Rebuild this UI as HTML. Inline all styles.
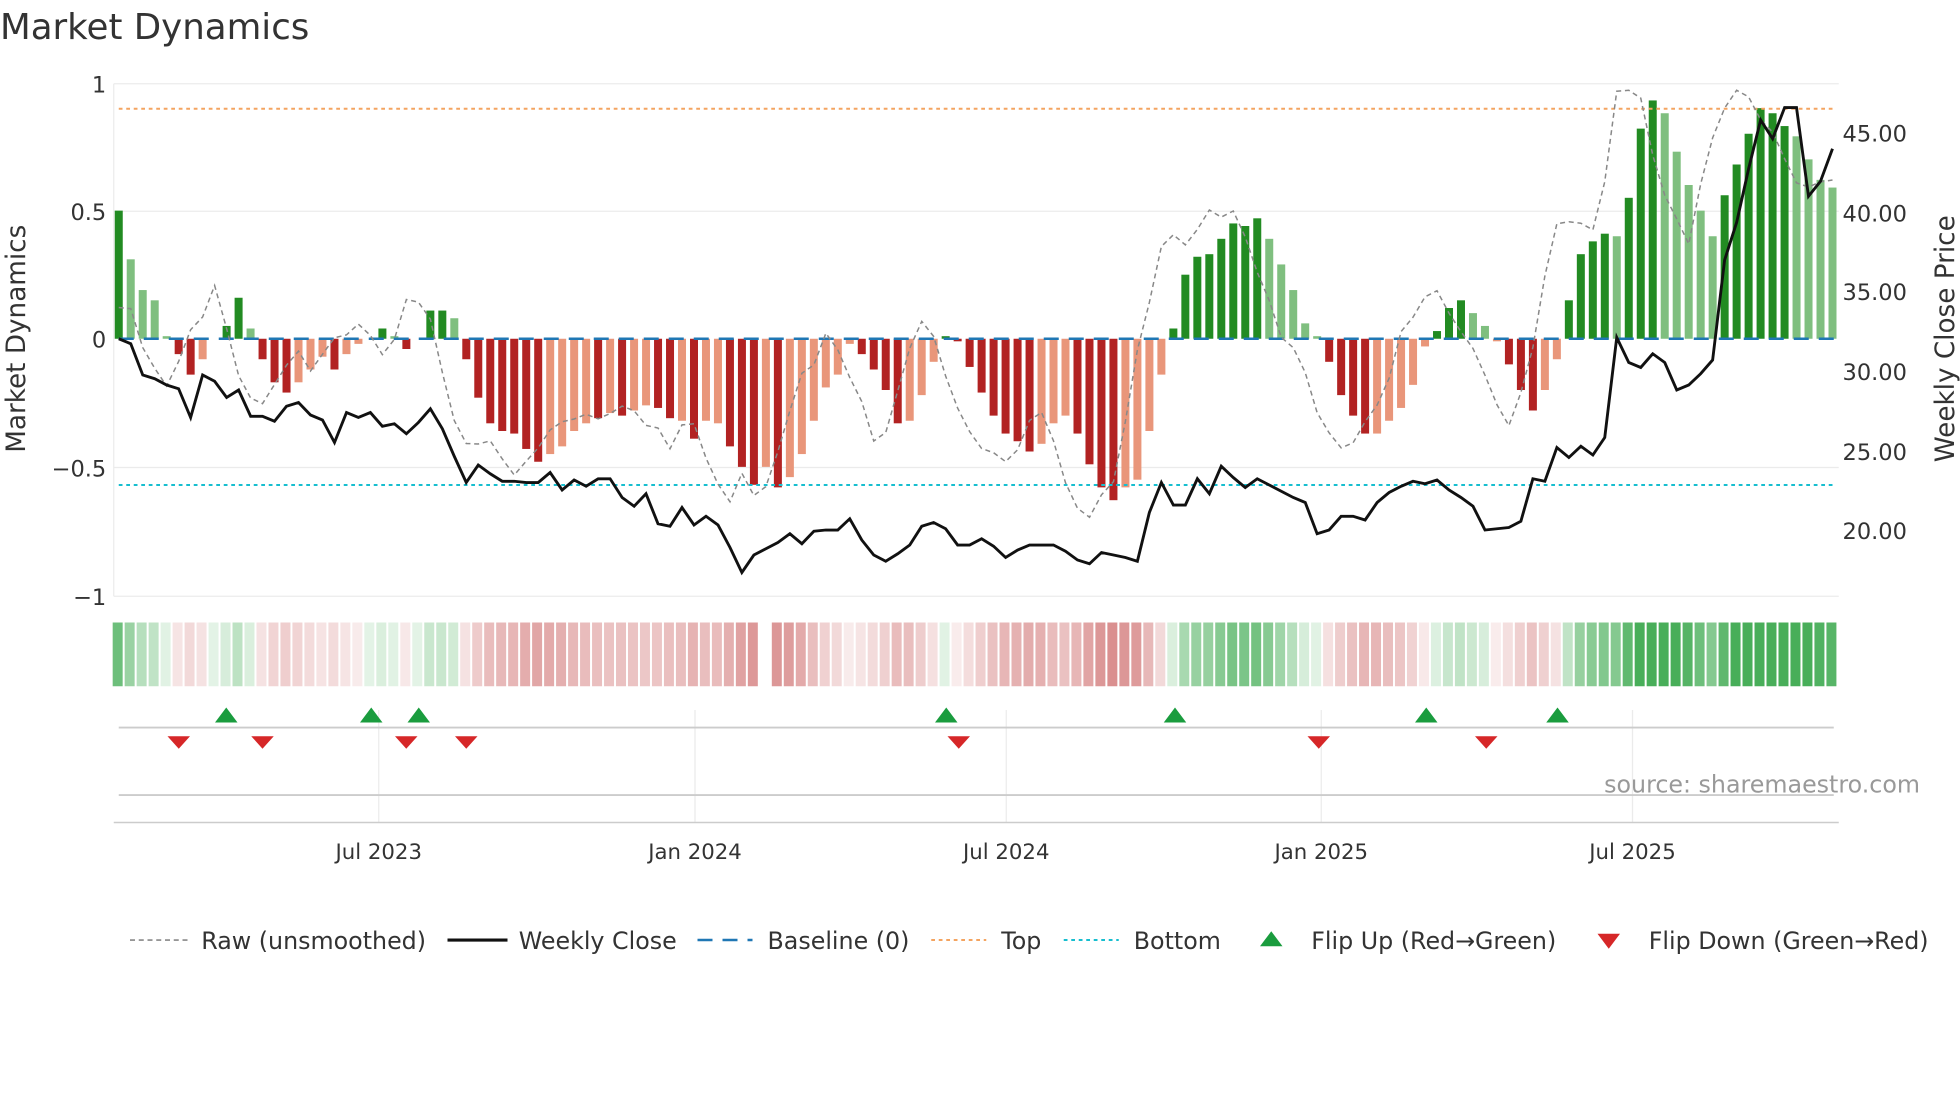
<!DOCTYPE html>
<html><head><meta charset="utf-8"><style>
html,body{margin:0;padding:0;background:#fff;}
svg{display:block;font-family:"DejaVu Sans","Liberation Sans",sans-serif;}
</style></head><body>
<svg id="s" width="1960" height="1102" viewBox="0 0 1568 881.6" xmlns="http://www.w3.org/2000/svg">
<rect width="1568" height="882" fill="#fff"/>
<text x="0" y="31" font-size="28.5" fill="#333">Market Dynamics</text>
<g stroke="#ebebeb" stroke-width="1">
<line x1="91" y1="67" x2="1471" y2="67"/><line x1="91" y1="169" x2="1471" y2="169"/>
<line x1="91" y1="374" x2="1471" y2="374"/><line x1="91" y1="477" x2="1471" y2="477"/>
<line x1="91" y1="67" x2="91" y2="477"/>
</g>
<g id="bars"></g>
<line x1="95" y1="271" x2="1467" y2="271" stroke="#1f77b4" stroke-width="2" stroke-dasharray="12,8"/>
<line x1="95" y1="87" x2="1467" y2="87" stroke="#f4a460" stroke-width="1.6" stroke-dasharray="3,3"/>
<line x1="95" y1="388" x2="1467" y2="388" stroke="#17becf" stroke-width="1.6" stroke-dasharray="3,3"/>
<polyline id="raw" fill="none" stroke="#888" stroke-width="1.2" stroke-dasharray="4,3"/>
<polyline id="close" fill="none" stroke="#111" stroke-width="2.3"/>
<g font-size="18" fill="#333" text-anchor="end">
<text x="85" y="74">1</text><text x="85" y="176">0.5</text><text x="85" y="278">0</text>
<text x="85" y="381">−0.5</text><text x="85" y="484">−1</text>
</g>
<g font-size="18" fill="#333">
<text x="1474" y="113">45.00</text><text x="1474" y="177">40.00</text><text x="1474" y="240">35.00</text>
<text x="1474" y="304">30.00</text><text x="1474" y="368">25.00</text><text x="1474" y="431">20.00</text>
</g>
<text transform="translate(20,271) rotate(-90)" font-size="21" fill="#333" text-anchor="middle">Market Dynamics</text>
<text transform="translate(1563,271) rotate(-90)" font-size="21" fill="#333" text-anchor="middle">Weekly Close Price</text>
<g id="heat"></g>
<g stroke="#ebebeb"><line x1="303" y1="568" x2="303" y2="658"/><line x1="556" y1="568" x2="556" y2="658"/><line x1="805" y1="568" x2="805" y2="658"/><line x1="1057" y1="568" x2="1057" y2="658"/><line x1="1306" y1="568" x2="1306" y2="658"/></g>
<line x1="95" y1="582" x2="1467" y2="582" stroke="#ccc" stroke-width="1.5"/>
<line x1="95" y1="636" x2="1467" y2="636" stroke="#ccc" stroke-width="1.5"/>
<line x1="91" y1="658" x2="1471" y2="658" stroke="#ccc" stroke-width="1.2"/>
<g id="flips"></g>
<text x="1536" y="634" font-size="19" fill="#999" text-anchor="end">source: sharemaestro.com</text>
<g font-size="17" fill="#333" text-anchor="middle">
<text x="303" y="687">Jul 2023</text><text x="556" y="687">Jan 2024</text><text x="805" y="687">Jul 2024</text><text x="1057" y="687">Jan 2025</text><text x="1306" y="687">Jul 2025</text>
</g>
<line x1="104" y1="752" x2="150" y2="752" stroke="#888" stroke-width="1.3" stroke-dasharray="4,3"/>
<line x1="358" y1="752" x2="406" y2="752" stroke="#111" stroke-width="2.5"/>
<line x1="558" y1="752" x2="602" y2="752" stroke="#1f77b4" stroke-width="2" stroke-dasharray="12,8"/>
<line x1="745" y1="752" x2="789" y2="752" stroke="#f4a460" stroke-width="1.6" stroke-dasharray="3,3"/>
<line x1="851" y1="752" x2="895" y2="752" stroke="#17becf" stroke-width="1.6" stroke-dasharray="3,3"/>
<polygon points="1008,757 1026,757 1017,745" fill="#1a9c3e"/>
<polygon points="1278,747 1296,747 1287,759" fill="#d62728"/>
<g font-size="19" fill="#333">
<text x="161" y="759">Raw (unsmoothed)</text><text x="415" y="759">Weekly Close</text><text x="614" y="759">Baseline (0)</text>
<text x="801" y="759">Top</text><text x="907" y="759">Bottom</text><text x="1049" y="759">Flip Up (Red→Green)</text><text x="1319" y="759">Flip Down (Green→Red)</text>
</g>
</svg>
<script>
var V=[[.5,'d'],[.31,'l'],[.19,'l'],[.15,'l'],[.01,'l'],[-.06,'d'],[-.14,'d'],[-.08,'l'],[0,'l'],[.05,'d'],[.16,'d'],[.04,'l'],[-.08,'d'],[-.17,'d'],[-.21,'d'],[-.17,'l'],[-.12,'l'],[-.07,'l'],[-.12,'d'],[-.06,'l'],[-.02,'l'],[0,'l'],[.04,'d'],[.01,'l'],[-.04,'d'],[0,'l'],[.11,'d'],[.11,'d'],[.08,'l'],[-.08,'d'],[-.23,'d'],[-.33,'d'],[-.36,'d'],[-.37,'d'],[-.43,'d'],[-.48,'d'],[-.45,'l'],[-.42,'l'],[-.36,'l'],[-.33,'l'],[-.31,'d'],[-.29,'l'],[-.3,'d'],[-.28,'l'],[-.26,'l'],[-.27,'d'],[-.31,'d'],[-.32,'l'],[-.39,'d'],[-.32,'l'],[-.33,'l'],[-.42,'d'],[-.5,'d'],[-.57,'d'],[-.5,'l'],[-.58,'d'],[-.54,'l'],[-.45,'l'],[-.32,'l'],[-.19,'l'],[-.14,'l'],[-.02,'l'],[-.06,'d'],[-.12,'d'],[-.2,'d'],[-.33,'d'],[-.32,'l'],[-.22,'l'],[-.09,'l'],[.01,'d'],[-.01,'d'],[-.11,'d'],[-.21,'d'],[-.3,'d'],[-.37,'d'],[-.4,'d'],[-.44,'d'],[-.41,'l'],[-.33,'l'],[-.3,'l'],[-.37,'d'],[-.49,'d'],[-.58,'d'],[-.63,'d'],[-.58,'l'],[-.55,'l'],[-.36,'l'],[-.14,'l'],[.04,'d'],[.25,'d'],[.32,'d'],[.33,'d'],[.39,'d'],[.45,'d'],[.44,'d'],[.47,'d'],[.39,'l'],[.29,'l'],[.19,'l'],[.06,'l'],[.01,'l'],[-.09,'d'],[-.22,'d'],[-.3,'d'],[-.37,'d'],[-.37,'l'],[-.32,'l'],[-.27,'l'],[-.18,'l'],[-.03,'l'],[.03,'d'],[.12,'d'],[.15,'d'],[.1,'l'],[.05,'l'],[-.01,'l'],[-.1,'d'],[-.2,'d'],[-.28,'d'],[-.2,'l'],[-.08,'l'],[.15,'d'],[.33,'d'],[.38,'d'],[.41,'d'],[.4,'l'],[.55,'d'],[.82,'d'],[.93,'d'],[.88,'l'],[.73,'l'],[.6,'l'],[.5,'l'],[.4,'l'],[.56,'d'],[.68,'d'],[.8,'d'],[.9,'d'],[.88,'d'],[.83,'d'],[.79,'l'],[.7,'l'],[.62,'l'],[.59,'l']];
var N=V.length,st=(1466-95)/(N-1),b='',h='',raw=[];
function X(i){return 95+i*st;}
for(var i=0;i<N;i++){var v=V[i][0],t=V[i][1],x=X(i),y=271-205*v;
var c=v>=0?(t=='d'?'#228b22':'#7fbf7f'):(t=='d'?'#b22222':'#e9967a');
b+='<rect x="'+(x-3.2)+'" y="'+Math.min(y,271)+'" width="6.4" height="'+Math.abs(205*v)+'" fill="'+c+'"/>';
if(i!=54){var a=Math.min(1,Math.abs(v)*1.3+.15);var hc=v>=0?'rgba(40,160,60,'+(a*.85)+')':'rgba(200,90,90,'+(a*.7)+')';
h+='<rect x="'+(x-4.86)+'" y="498" width="'+(st-1.6)+'" height="51" fill="'+hc+'"/>';}
var n2=V[Math.min(N-1,i+2)][0];var r=1.3*n2-.25*v;r=Math.max(-.78,Math.min(.97,r));raw.push(x.toFixed(1)+','+(271-205*r).toFixed(1));}
document.getElementById('bars').innerHTML=b;document.getElementById('heat').innerHTML=h;
document.getElementById('raw').setAttribute('points',raw.join(' '));
var C=[271,275,300,303,308,311,334,300,305,318,312,333,333,337,325,322,332,336,354,330,334,330,341,339,347,338,327,343,365,386,372,379,385,385,386,386,378,392,384,389,383,383,398,405,395,419,421,406,420,413,420,438,458,444,439,434,427,435,425,424,424,415,432,444,449,443,436,421,418,423,436,436,431,437,446,440,436,436,436,441,448,451,442,444,446,449,410,386,404,404,383,395,373,382,390,383,388,393,398,402,427,424,413,413,416,402,394,389,385,387,384,392,398,405,424,423,422,417,383,385,358,366,357,364,350,270,290,294,283,290,312,308,299,288,208,178,135,96,111,86,86,157,145,119];
var p=[];for(var i=0;i<C.length;i++)p.push((95+i*(1466-95)/(C.length-1)).toFixed(1)+','+C[i]);
document.getElementById('close').setAttribute('points',p.join(' '));
var f='';[181,297,335,757,940,1141,1246].forEach(function(x){f+='<polygon points="'+(x-9)+',578 '+(x+9)+',578 '+x+',566" fill="#1a9c3e"/>';});
[143,210,325,373,767,1055,1189].forEach(function(x){f+='<polygon points="'+(x-9)+',589 '+(x+9)+',589 '+x+',599" fill="#d62728"/>';});
document.getElementById('flips').innerHTML=f;
</script>
</body></html>
